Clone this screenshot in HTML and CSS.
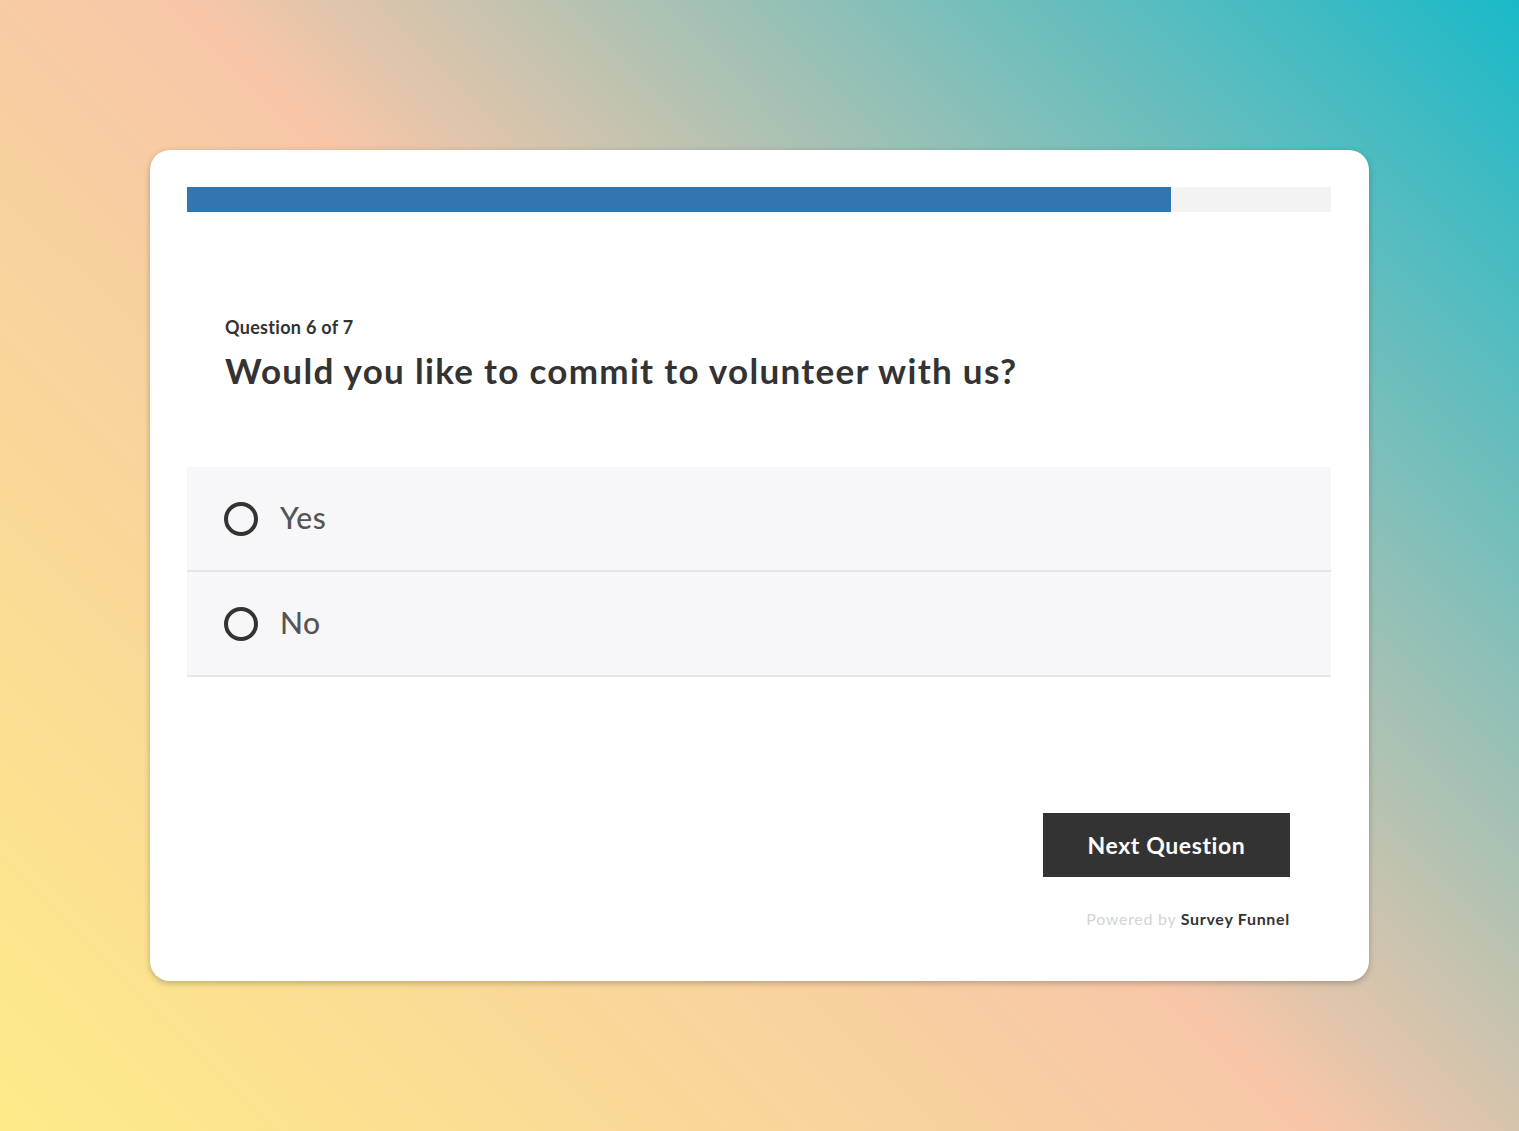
FILE: index.html
```html
<!DOCTYPE html>
<html lang="en">
<head>
<meta charset="utf-8">
<title>Survey</title>
<link rel="stylesheet" href="styles.css">
</head>
<body>
<div class="page">
  <main class="card">
    <div class="progress"><div class="progress-fill" style="width: 86%"></div></div>
    <section class="question">
      <div class="q-count">Question 6 of 7</div>
      <h1 class="q-title">Would you like to commit to volunteer with us?</h1>
    </section>
    <div class="options">
      <label class="option"><span class="radio"></span><span class="opt-text">Yes</span></label>
      <label class="option"><span class="radio"></span><span class="opt-text">No</span></label>
    </div>
    <div class="footer">
      <button class="next-btn" type="button">Next Question</button>
      <div class="powered">Powered by <strong>Survey Funnel</strong></div>
    </div>
  </main>
</div>
</body>
</html>
```

FILE: styles.css
```css
* { box-sizing: border-box; }
html, body { margin: 0; padding: 0; }
body {
  font-family: "Lato", "Noto Sans", sans-serif;
  color: #333;
}
.page {
  width: 100%;
  height: 1131px;
  display: flex;
  align-items: center;
  justify-content: center;
  background: linear-gradient(45deg, #fdeb88 0%, #f7c6a8 50%, #1ab9c8 100%);
}
.card {
  width: 1219px;
  height: 831px;
  background: #fff;
  border-radius: 20px;
  box-shadow: 0 2px 6px rgba(0,0,0,0.25);
  padding: 37px 38px 0 37px;
  display: flex;
  flex-direction: column;
}
.progress {
  height: 25px;
  background: #f3f3f3;
}
.progress-fill {
  height: 100%;
  background: #3176b0;
}
.question {
  padding: 103px 38px 0;
  margin-bottom: 75px;
}
.q-count {
  font-size: 18px;
  font-weight: 700;
  line-height: 24px;
  letter-spacing: 0.3px;
  color: #333;
}
.q-title {
  margin: 9px 0 0;
  font-size: 35px;
  font-weight: 700;
  line-height: 44px;
  letter-spacing: 1.3px;
  color: #333;
}
.options {
  display: flex;
  flex-direction: column;
}
.option {
  height: 105px;
  background: #f7f7f9;
  border-bottom: 2px solid #e6e6e8;
  display: flex;
  align-items: center;
  padding-left: 37px;
  gap: 22px;
  cursor: pointer;
}
.radio {
  width: 34px;
  height: 34px;
  border: 4px solid #333;
  border-radius: 50%;
  flex: none;
}
.opt-text {
  font-size: 30px;
  color: #555;
  font-weight: 500;
  letter-spacing: 0.6px;
  margin-top: -3px;
}
.footer {
  margin-top: 136px;
  padding-right: 41px;
  display: flex;
  flex-direction: column;
  align-items: flex-end;
}
.next-btn {
  width: 247px;
  height: 64px;
  border: none;
  background: #333;
  color: #fff;
  font-family: inherit;
  font-size: 23px;
  font-weight: 700;
  letter-spacing: 0.6px;
  cursor: pointer;
}
.powered {
  margin-top: 32px;
  font-size: 16px;
  line-height: 20px;
  letter-spacing: 0.7px;
  color: #d4d4d4;
}
.powered strong {
  color: #333;
  font-weight: 700;
}
```
